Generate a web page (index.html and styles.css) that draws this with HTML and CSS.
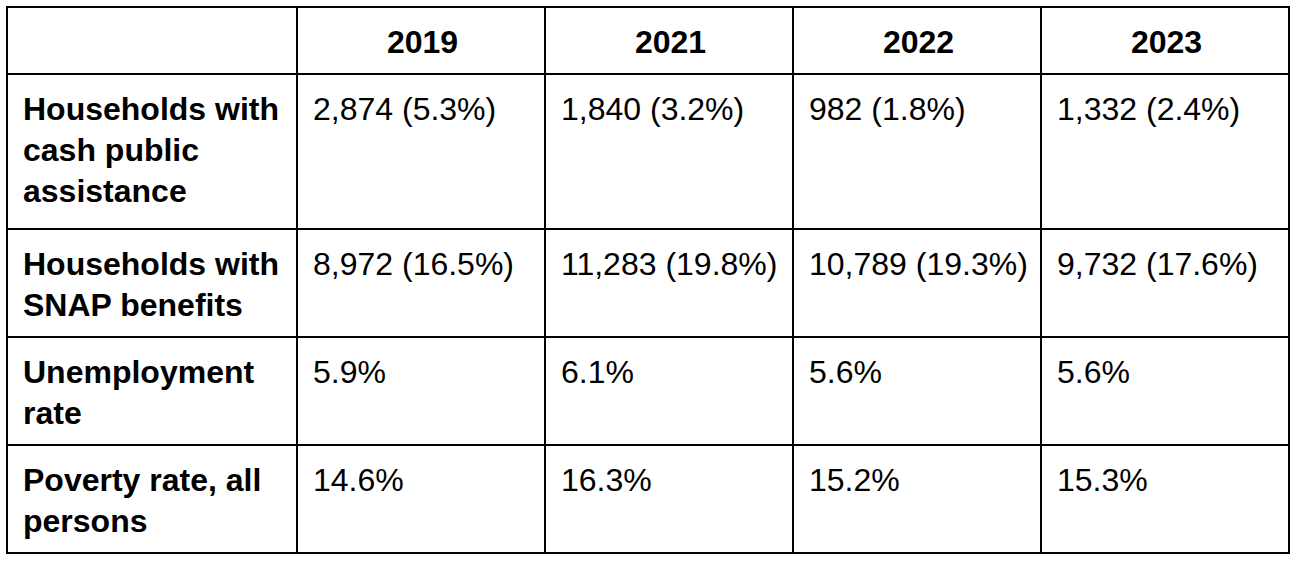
FILE: index.html
```html
<!DOCTYPE html>
<html lang="en">
<head>
<meta charset="utf-8">
<title>Assistance indicators</title>
<link rel="stylesheet" href="styles.css">
</head>
<body>
<div class="page">
  <table class="data">
    <colgroup>
      <col class="c-label">
      <col class="c-year">
      <col class="c-year">
      <col class="c-year">
      <col class="c-year">
    </colgroup>
    <thead>
      <tr>
        <th class="corner"></th>
        <th>2019</th>
        <th>2021</th>
        <th>2022</th>
        <th>2023</th>
      </tr>
    </thead>
    <tbody>
      <tr class="row-tall">
        <th class="label">Households with cash public assistance</th>
        <td>2,874 (5.3%)</td>
        <td>1,840 (3.2%)</td>
        <td>982 (1.8%)</td>
        <td>1,332 (2.4%)</td>
      </tr>
      <tr>
        <th class="label">Households with SNAP benefits</th>
        <td>8,972 (16.5%)</td>
        <td>11,283 (19.8%)</td>
        <td>10,789 (19.3%)</td>
        <td>9,732 (17.6%)</td>
      </tr>
      <tr>
        <th class="label">Unemployment rate</th>
        <td>5.9%</td>
        <td>6.1%</td>
        <td>5.6%</td>
        <td>5.6%</td>
      </tr>
      <tr>
        <th class="label">Poverty rate, all persons</th>
        <td>14.6%</td>
        <td>16.3%</td>
        <td>15.2%</td>
        <td>15.3%</td>
      </tr>
    </tbody>
  </table>
</div>
</body>
</html>
```

FILE: styles.css
```css
html, body {
  margin: 0;
  padding: 0;
  background: #ffffff;
}

.page {
  padding: 6px;
}

.data {
  border-collapse: collapse;
  table-layout: fixed;
  width: 1284px;
  font-family: "Liberation Sans", Arial, sans-serif;
  font-size: 32px;
  line-height: 41px;
  color: #000000;
}

.c-label {
  width: 290px;
}

.c-year {
  width: 248px;
}

.data th,
.data td {
  border: 2px solid #000000;
  padding: 14px 12px 10px 15px;
  vertical-align: top;
  text-align: left;
  font-weight: normal;
}

.data thead th {
  text-align: center;
  font-weight: bold;
}

.data th.label {
  font-weight: bold;
}

.data .row-tall th,
.data .row-tall td {
  padding-bottom: 16px;
}
```
